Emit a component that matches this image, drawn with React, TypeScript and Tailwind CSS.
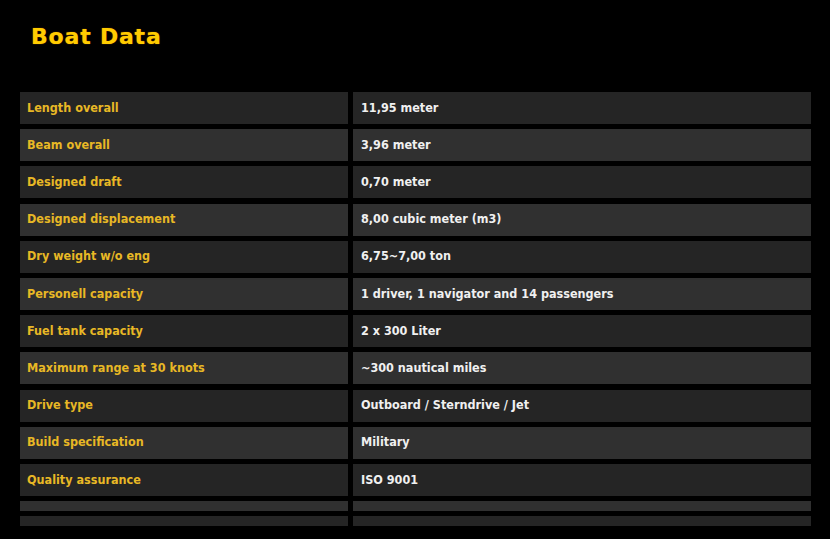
import React from "react";

const rows: [string, string][] = [
  ["Length overall", "11,95 meter"],
  ["Beam overall", "3,96 meter"],
  ["Designed draft", "0,70 meter"],
  ["Designed displacement", "8,00 cubic meter (m3)"],
  ["Dry weight w/o eng", "6,75~7,00 ton"],
  ["Personell capacity", "1 driver, 1 navigator and 14 passengers"],
  ["Fuel tank capacity", "2 x 300 Liter"],
  ["Maximum range at 30 knots", "~300 nautical miles"],
  ["Drive type", "Outboard / Sterndrive / Jet"],
  ["Build specification", "Military"],
  ["Quality assurance", "ISO 9001"],
];

export default function App() {
  return (
    <div className="w-[830px] h-[539px] bg-black overflow-hidden" style={{ fontFamily: '"DejaVu Sans Condensed", "DejaVu Sans", sans-serif' }}>
      <div className="pl-[31px] pt-[22px] h-[92px]">
        <h1
          className="text-[22px] leading-[30px] font-bold text-[#ffcc00] tracking-[0.8px]"
          style={{ fontFamily: '"DejaVu Sans", sans-serif', textShadow: "0 0 1px #c87000" }}
        >
          Boat Data
        </h1>
      </div>
      <div className="ml-[20px] w-[791px] grid grid-cols-[328px_458px] gap-x-[5px] gap-y-[5.2px]">
        {rows.map(([k, v], i) => {
          const bg = i % 2 === 0 ? "bg-[#252525]" : "bg-[#303030]";
          return (
            <React.Fragment key={k}>
              <div className={`${bg} h-8 flex items-center pl-[7px] text-[12.5px] font-bold text-[#e8b825]`}>{k}</div>
              <div className={`${bg} h-8 flex items-center pl-[8px] text-[12.5px] font-bold text-[#f0f0f0]`}>{v}</div>
            </React.Fragment>
          );
        })}
        <div className="bg-[#303030] h-[10px]" />
        <div className="bg-[#303030] h-[10px]" />
        <div className="bg-[#252525] h-[10px]" />
        <div className="bg-[#252525] h-[10px]" />
      </div>
    </div>
  );
}
